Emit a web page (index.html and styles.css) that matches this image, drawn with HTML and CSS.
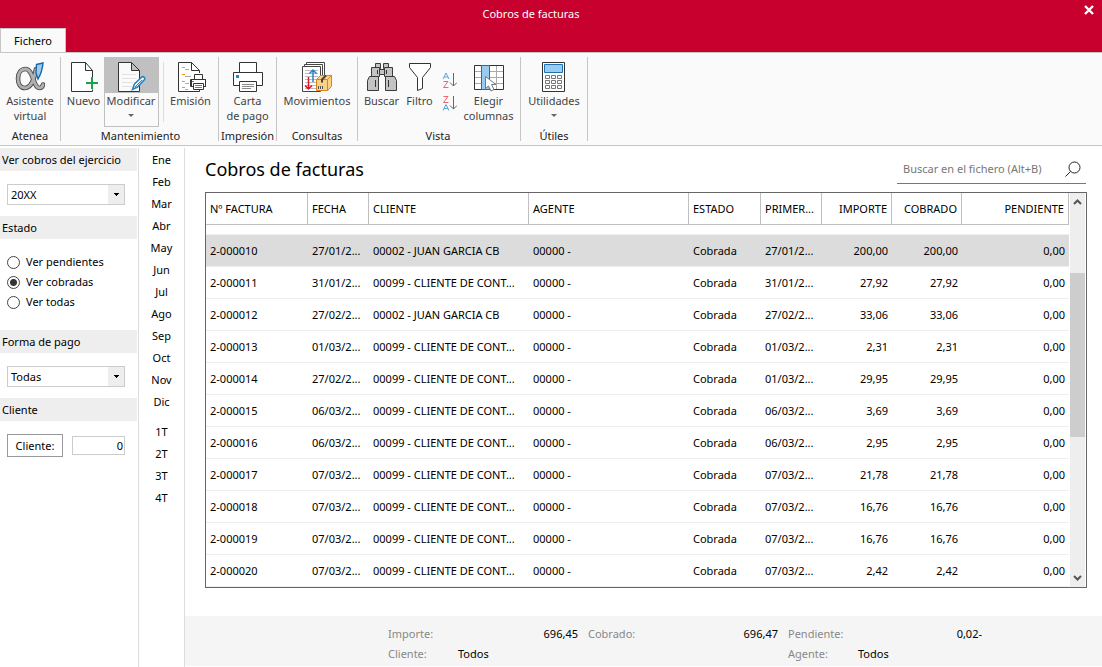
FILE: index.html
```html
<!DOCTYPE html>
<html lang="es">
<head>
<meta charset="utf-8">
<title>Cobros de facturas</title>
<link rel="stylesheet" href="styles.css">
</head>
<body>
<header class="titlebar">
  <div class="window-title">Cobros de facturas</div>
  <button class="close" type="button" aria-label="Cerrar"><svg width="10" height="10" viewBox="0 0 10 10"><path d="M1 1l8 8M9 1L1 9" stroke="#fff" stroke-width="2.4" fill="none"/></svg></button>
  <button class="tab" type="button">Fichero</button>
</header>

<nav class="ribbon" aria-label="Fichero">
  <section class="group group-atenea">
    <div class="tools">
      <button class="tool" type="button">
        <svg width="30" height="30" viewBox="0 0 30 30"><g fill="none" stroke-linecap="round"><path d="M21 7C19.500 15 17 26 10 26C5.500 26 3 22 3 16.500C3 11 6 7 10.500 7C18.500 7 18 26 24.500 26C26.500 26 27.500 25 28 22.500" stroke="#4a4a4a" stroke-width="4.600"/><path d="M21 7C19.500 15 17 26 10 26C5.500 26 3 22 3 16.500C3 11 6 7 10.500 7C18.500 7 18 26 24.500 26C26.500 26 27.500 25 28 22.500" stroke="#b0b0b0" stroke-width="2.800"/></g><path d="M21.500 2.500l6.500-1.500c-.500 6-2 11-5 16l-2-6z" fill="#9dcbee" stroke="#1769aa" stroke-width="1.400"/></svg>
        <span>Asistente<br>virtual</span>
      </button>
    </div>
    <h2>Atenea</h2>
  </section>
  <section class="group group-mantenimiento">
    <div class="tools">
      <button class="tool tool-new" type="button">
        <svg width="30" height="30" viewBox="0 0 30 30"><path d="M2.500.500h14l7 8v21h-21zM16.500.500v8h7" fill="#fff" stroke="#333"/><path d="M17 21.500h12M23 15.500v12" stroke="#fafafa" stroke-width="4"/><path d="M17 21h12M23 15v12" stroke="#16a34a" stroke-width="2"/></svg>
        <span>Nuevo</span>
      </button>
      <button class="tool tool-edit" type="button">
        <svg width="30" height="30" viewBox="0 0 30 30"><path d="M2.500.500h13l8 8v21h-21zM15.500.500v8h8" fill="#fafafa" stroke="#333"/><path d="M6 12.500h14M6 16.500h14M6 20.500h11M6 24.500h10" stroke="#e2e2e2"/><path d="M16.500 27.500l2-5.500 7.500-7c1.500-1 3.500 1 2.500 2.500l-7 7.500z" fill="#fff" stroke="#2585c7" stroke-width="1.600"/><path d="M19 25l7-7" stroke="#2585c7"/></svg>
        <span>Modificar</span><i class="caret"></i>
      </button>
      <span class="divider"></span>
      <button class="tool tool-emit" type="button">
        <svg width="30" height="30" viewBox="0 0 30 30"><path d="M23.500 11V8.500l-8-8h-13v29h21V28M15.500.500v8h8" fill="#fff" stroke="#333"/><path d="M6 5.500h3M6 12.500h3M6 19.500h3M6 25.500h3" stroke="#ee9a21"/><path d="M9 7.500h4M9 14.500h6M9 21.500h4M9 27.500h3" stroke="#aaa"/><path d="M18.500 17.500v-5h8v5h3v7h-14v-7zM14.500 17.500h15v7h-15z" fill="#fff" stroke="#333"/><path d="M17.500 21.500h10v6h-10z" fill="#fff" stroke="#333"/><path d="M19 23.500h7M19 25.500h7" stroke="#777"/><path d="M16 19.500h2" stroke="#2c8dcc"/></svg>
        <span>Emisión</span>
      </button>
    </div>
    <h2>Mantenimiento</h2>
  </section>
  <section class="group group-impresion">
    <div class="tools">
      <button class="tool" type="button">
        <svg width="30" height="30" viewBox="0 0 30 30"><path d="M6.500.500h17v10h-17z" fill="#fff" stroke="#333"/><path d="M.500 10.500h29v13H.500z" fill="#fff" stroke="#333"/><path d="M6.500 19.500h17v10h-17z" fill="#fff" stroke="#333"/><path d="M9 22.500h12M9 24.500h12M9 26.500h9" stroke="#8a8a8a"/><path d="M3 13h3v3H3z" fill="#2585c7"/></svg>
        <span>Carta<br>de pago</span>
      </button>
    </div>
    <h2>Impresión</h2>
  </section>
  <section class="group group-consultas">
    <div class="tools">
      <button class="tool" type="button">
        <svg width="30" height="30" viewBox="0 0 30 30"><path d="M4.500 3V.500h18v24h-3" fill="#fff" stroke="#444"/><path d="M2.500 5V2.500h18v24h-3" fill="#fff" stroke="#444"/><path d="M.500 4.500h18v25H.500z" fill="#fff" stroke="#444"/><path d="M3 8.500h13M3 11.500h13M3 14.500h13M3 17.500h11M3 20.500h11M3 23.500h11M3 26.500h11" stroke="#bbb"/><path d="M11 20V8M7.500 11.500L11 8l3.500 3.500" fill="none" stroke="#2585c7" stroke-width="1.500"/><path d="M6.500 15v12M3 23.500L6.500 27l3.500-3.500" fill="none" stroke="#e01030" stroke-width="1.500"/><path d="M14.500 17.500l4-4h11v11l-4 4h-11z" fill="#ffd184" stroke="#dd8517"/><path d="M14.500 17.500h11v11M25.500 17.500l4-4" fill="none" stroke="#dd8517"/><path d="M20 20.500v-3l4-4" fill="none" stroke="#444" stroke-width="2"/><path d="M16.500 24v3M18.500 24v3M20.500 24v3" stroke="#555"/></svg>
        <span>Movimientos</span>
      </button>
    </div>
    <h2>Consultas</h2>
  </section>
  <section class="group group-vista">
    <div class="tools">
      <button class="tool tool-search" type="button">
        <svg width="30" height="30" viewBox="0 0 30 30"><g fill="#c3c3c3" stroke="#3b3b3b"><path d="M12.500 7.500h5v5h-5z"/><path d="M8.500 1.500h5v5h-5zM16.500 1.500h5v5h-5z"/><path d="M4.500 5.500h8v9h-8zM17.500 5.500h8v9h-8z"/><path d="M2.500 14.500h9v14h-11v-10zM18.500 14.500h9l2 4v10h-11z"/></g><path d="M8.500 18v7M21.500 18v7M10.500 8v4M19.500 8v4" stroke="#333" fill="none"/></svg>
        <span>Buscar</span>
      </button>
      <button class="tool tool-filter" type="button">
        <svg width="30" height="30" viewBox="0 0 30 30"><path d="M4.500 1.500h21v4l-8 10v11l-5 2v-13l-8-10z" fill="#fff" stroke="#333"/></svg>
        <span>Filtro</span>
      </button>
      <div class="sorts">
        <button type="button" aria-label="Orden ascendente"><svg width="15" height="17" viewBox="0 0 15 17"><path d="M1 7l3-6 3 6M2 5h4" fill="none" stroke="#58a9d8"/><path d="M1.500 9.500h4.500l-4.500 6h5" fill="none" stroke="#ee6670"/><path d="M11.500 1v13M8 10.500l3.500 3.500 3.500-3.500" fill="none" stroke="#666"/></svg></button>
        <button type="button" aria-label="Orden descendente"><svg width="15" height="17" viewBox="0 0 15 17"><path d="M1.500 1.500H6l-4.500 6h5" fill="none" stroke="#ee6670"/><path d="M1 15.500l3-6 3 6M2 13.500h4" fill="none" stroke="#58a9d8"/><path d="M11.500 1v13M8 10.500l3.500 3.500 3.500-3.500" fill="none" stroke="#666"/></svg></button>
      </div>
      <button class="tool tool-columns" type="button">
        <svg width="30" height="30" viewBox="0 0 30 30"><path d="M.500 3.500h29v24H.500z" fill="#fff" stroke="#333"/><path d="M1 9.500h28M1 15.500h28M1 21.500h28M22.500 4v23" stroke="#aaa"/><path d="M7.500 3.500h8v24h-8z" fill="#9bcbee" stroke="#1b72b5"/><path d="M11.500 14.500v12l3-2.500 2.500 5 3-1.500-2.500-5h4.500z" fill="#fff" stroke="#777"/></svg>
        <span>Elegir<br>columnas</span>
      </button>
    </div>
    <h2>Vista</h2>
  </section>
  <section class="group group-utiles">
    <div class="tools">
      <button class="tool" type="button">
        <svg width="30" height="30" viewBox="0 0 30 30"><path d="M3.500.500h22v29h-22z" fill="#fff" stroke="#333"/><path d="M5.500 2.500h18v8h-18z" fill="#9bcbee" stroke="#1b72b5"/><g fill="#fff" stroke="#777"><path d="M6.500 13.500h4v3h-4zM12.500 13.500h4v3h-4zM18.500 13.500h4v3h-4zM6.500 18.500h4v3h-4zM12.500 18.500h4v3h-4zM18.500 18.500h4v3h-4zM6.500 23.500h4v3h-4zM12.500 23.500h4v3h-4zM18.500 23.500h4v3h-4z"/></g></svg>
        <span>Utilidades</span><i class="caret"></i>
      </button>
    </div>
    <h2>Útiles</h2>
  </section>
</nav>

<div class="workspace">
  <aside class="filters">
    <h3><label for="ejercicio">Ver cobros del ejercicio</label></h3>
    <div class="field">
      <select id="ejercicio"><option>20XX</option></select>
    </div>
    <h3>Estado</h3>
    <div class="radios">
      <label><input type="radio" name="estado">Ver pendientes</label>
      <label><input type="radio" name="estado" checked>Ver cobradas</label>
      <label><input type="radio" name="estado">Ver todas</label>
    </div>
    <h3><label for="pago">Forma de pago</label></h3>
    <div class="field">
      <select id="pago"><option>Todas</option></select>
    </div>
    <h3>Cliente</h3>
    <div class="client">
      <button type="button">Cliente:</button>
      <input type="text" value="0" aria-label="Cliente">
    </div>
  </aside>

  <nav class="periods" aria-label="Periodo">
    <button type="button">Ene</button><button type="button">Feb</button><button type="button">Mar</button><button type="button">Abr</button><button type="button">May</button><button type="button">Jun</button><button type="button">Jul</button><button type="button">Ago</button><button type="button">Sep</button><button type="button">Oct</button><button type="button">Nov</button><button type="button">Dic</button>
    <button class="quarter" type="button">1T</button><button type="button">2T</button><button type="button">3T</button><button type="button">4T</button>
  </nav>

  <main class="content">
    <div class="heading">
      <h1>Cobros de facturas</h1>
      <div class="search">
        <input type="text" placeholder="Buscar en el fichero (Alt+B)" aria-label="Buscar en el fichero">
        <svg width="16" height="16" viewBox="0 0 16 16"><circle cx="9.500" cy="6.500" r="5.500" fill="none" stroke="#222"/><path d="M5.500 10.500L.500 15.500" stroke="#222"/></svg>
      </div>
    </div>
    <div class="grid">
      <table>
        <colgroup><col class="c-num"><col class="c-date"><col class="c-client"><col><col class="c-state"><col class="c-date"><col class="c-amount"><col class="c-amount"><col class="c-pending"></colgroup>
        <thead><tr><th>Nº FACTURA</th><th>FECHA</th><th>CLIENTE</th><th>AGENTE</th><th>ESTADO</th><th>PRIMER...</th><th class="n">IMPORTE</th><th class="n">COBRADO</th><th class="n">PENDIENTE</th></tr></thead>
        <tbody>
          <tr class="partial"><td colspan="9"></td></tr>
          <tr class="selected"><td>2-000010</td><td>27/01/2...</td><td>00002 - JUAN GARCIA CB</td><td>00000 -</td><td>Cobrada</td><td>27/01/2...</td><td class="n">200,00</td><td class="n">200,00</td><td class="n">0,00</td></tr>
          <tr><td>2-000011</td><td>31/01/2...</td><td>00099 - CLIENTE DE CONT...</td><td>00000 -</td><td>Cobrada</td><td>31/01/2...</td><td class="n">27,92</td><td class="n">27,92</td><td class="n">0,00</td></tr>
          <tr><td>2-000012</td><td>27/02/2...</td><td>00002 - JUAN GARCIA CB</td><td>00000 -</td><td>Cobrada</td><td>27/02/2...</td><td class="n">33,06</td><td class="n">33,06</td><td class="n">0,00</td></tr>
          <tr><td>2-000013</td><td>01/03/2...</td><td>00099 - CLIENTE DE CONT...</td><td>00000 -</td><td>Cobrada</td><td>01/03/2...</td><td class="n">2,31</td><td class="n">2,31</td><td class="n">0,00</td></tr>
          <tr><td>2-000014</td><td>27/02/2...</td><td>00099 - CLIENTE DE CONT...</td><td>00000 -</td><td>Cobrada</td><td>01/03/2...</td><td class="n">29,95</td><td class="n">29,95</td><td class="n">0,00</td></tr>
          <tr><td>2-000015</td><td>06/03/2...</td><td>00099 - CLIENTE DE CONT...</td><td>00000 -</td><td>Cobrada</td><td>06/03/2...</td><td class="n">3,69</td><td class="n">3,69</td><td class="n">0,00</td></tr>
          <tr><td>2-000016</td><td>06/03/2...</td><td>00099 - CLIENTE DE CONT...</td><td>00000 -</td><td>Cobrada</td><td>06/03/2...</td><td class="n">2,95</td><td class="n">2,95</td><td class="n">0,00</td></tr>
          <tr><td>2-000017</td><td>07/03/2...</td><td>00099 - CLIENTE DE CONT...</td><td>00000 -</td><td>Cobrada</td><td>07/03/2...</td><td class="n">21,78</td><td class="n">21,78</td><td class="n">0,00</td></tr>
          <tr><td>2-000018</td><td>07/03/2...</td><td>00099 - CLIENTE DE CONT...</td><td>00000 -</td><td>Cobrada</td><td>07/03/2...</td><td class="n">16,76</td><td class="n">16,76</td><td class="n">0,00</td></tr>
          <tr><td>2-000019</td><td>07/03/2...</td><td>00099 - CLIENTE DE CONT...</td><td>00000 -</td><td>Cobrada</td><td>07/03/2...</td><td class="n">16,76</td><td class="n">16,76</td><td class="n">0,00</td></tr>
          <tr><td>2-000020</td><td>07/03/2...</td><td>00099 - CLIENTE DE CONT...</td><td>00000 -</td><td>Cobrada</td><td>07/03/2...</td><td class="n">2,42</td><td class="n">2,42</td><td class="n">0,00</td></tr>
        </tbody>
      </table>
      <div class="scrollbar">
        <button type="button" aria-label="Subir"><svg width="9" height="6" viewBox="0 0 9 6"><path d="M1 5l3.500-3.500L8 5" fill="none" stroke="#555" stroke-width="2"/></svg></button>
        <div class="track"><div class="thumb"></div></div>
        <button type="button" aria-label="Bajar"><svg width="9" height="6" viewBox="0 0 9 6"><path d="M1 1l3.500 3.500L8 1" fill="none" stroke="#555" stroke-width="2"/></svg></button>
      </div>
    </div>
    <footer class="totals">
      <span class="label">Importe:</span><span class="amount">696,45</span>
      <span class="label">Cobrado:</span><span class="amount">696,47</span>
      <span class="label">Pendiente:</span><span class="amount amount-signed">0,02-</span>
      <span class="label">Cliente:</span><span class="wide">Todos</span>
      <span class="label">Agente:</span><span>Todos</span>
    </footer>
  </main>
</div>
</body>
</html>
```
FILE: styles.css
```css
* { box-sizing: border-box; }

body {
  margin: 0;
  min-height: 100vh;
  display: flex;
  flex-direction: column;
  background: #fff;
  color: #000;
  font: 11px/15px "Noto Sans", "Open Sans", sans-serif;
}

button, input, select { font: inherit; color: inherit; }
button { padding: 0; border: 0; background: none; }
h1, h2, h3 { margin: 0; font-weight: 400; }
svg { display: block; flex: none; }

.titlebar {
  display: grid;
  grid-template-columns: 1fr 40px;
  grid-template-rows: 28px 24px;
  background: #c8002d;
}
.window-title {
  color: #fff;
  line-height: 28px;
  text-align: center;
}
.close {
  display: flex;
  justify-content: flex-end;
  align-items: flex-start;
  padding: 5px 8px;
}
.tab {
  width: 66px;
  background: #fafafa;
  border: 1px solid #c6c6c6;
  border-bottom: 0;
}

.ribbon {
  display: flex;
  height: 94px;
  padding: 4px 0;
  background: #fafafa;
  border-top: 1px solid #c6c6c6;
  border-bottom: 1px solid #c6c6c6;
}
.group {
  display: flex;
  flex-direction: column;
  justify-content: space-between;
  border-right: 1px solid #c6c6c6;
}
.group h2 {
  font-size: 11px;
  line-height: 11px;
  color: #222;
  text-align: center;
  white-space: nowrap;
}
.group-atenea { width: 61px; }
.group-mantenimiento { width: 158px; padding-left: 2px; }
.group-impresion { width: 58px; }
.group-consultas { width: 81px; }
.group-vista { width: 163px; padding-right: 2px; }
.group-utiles { width: 67px; }
.tools {
  display: flex;
  justify-content: center;
}
.tool {
  display: flex;
  flex-direction: column;
  align-items: center;
  height: 70px;
  padding-top: 5px;
  color: #444;
  white-space: nowrap;
}
.tool span { padding-top: 1px; }
.tool-new { width: 40px; }
.tool-edit {
  width: 55px;
  border: 1px solid #c0c0c0;
  background: linear-gradient(#c0c0c0 35px, #fafafa 35px);
  padding-top: 4px;
}
.tool-emit { width: 54px; }
.tool-search { width: 42px; }
.tool-filter { width: 34px; }
.tool-columns { width: 54px; }
.divider {
  height: 60px;
  width: 1px;
  margin: 5px 0 0 4px;
  background: #ddd;
}
.caret {
  margin-top: 6px;
  border: 3px solid transparent;
  border-top-color: #666;
  border-bottom: 0;
}
.sorts {
  display: flex;
  flex-direction: column;
  gap: 6px;
  padding: 15px 5px 0;
}

.workspace {
  flex: 1;
  display: flex;
  padding-top: 2px;
}

.filters {
  width: 139px;
  border-right: 1px solid #ddd;
}
.filters h3 {
  margin-right: 1px;
  padding-left: 2px;
  background: #eee;
  font-size: 11px;
  line-height: 23px;
}
.field { padding: 13px 13px 11px 7px; }
.field select {
  display: block;
  width: 100%;
  height: 21px;
  padding: 0 20px 0 3px;
  appearance: none;
  border: 1px solid #ccc;
  border-radius: 0;
  background:
    linear-gradient(#000, #000) right 5px top 8px / 5px 1px no-repeat,
    linear-gradient(#000, #000) right 6px top 9px / 3px 1px no-repeat,
    linear-gradient(#000, #000) right 7px top 10px / 1px 1px no-repeat,
    linear-gradient(#eee, #eee) right / 16px 100% no-repeat,
    #fff;
}
.radios {
  display: flex;
  flex-direction: column;
  padding: 13px 0 18px 7px;
}
.radios label {
  display: flex;
  align-items: center;
  gap: 6px;
  line-height: 20px;
}
.radios input {
  appearance: none;
  width: 13px;
  height: 13px;
  margin: 0;
  border: 1px solid #444;
  border-radius: 50%;
}
.radios input:checked {
  background: radial-gradient(circle, #333 3px, #fff 4px);
}
.client {
  display: flex;
  align-items: center;
  gap: 9px;
  padding: 13px 13px 0 7px;
}
.client button {
  width: 56px;
  height: 23px;
  border: 1px solid #999;
  background: #fff;
}
.client input {
  flex: 1;
  min-width: 0;
  height: 19px;
  padding: 0 1px;
  border: 1px solid #ccc;
  text-align: right;
}

.periods {
  display: flex;
  flex-direction: column;
  width: 46px;
  border-right: 1px solid #ddd;
}
.periods button { height: 22px; }
.periods .quarter { margin-top: 8px; }

.content {
  flex: 1;
  min-width: 0;
  display: flex;
  flex-direction: column;
  padding-bottom: 1px;
}
.heading {
  display: flex;
  justify-content: space-between;
  align-items: flex-start;
  padding: 6px 16px 8px 20px;
}
h1 {
  font-size: 18px;
  line-height: 30px;
}
.search {
  display: flex;
  align-items: center;
  width: 189px;
  height: 30px;
  padding: 0 5px 0 6px;
  border-bottom: 1px solid #777;
}
.search input {
  flex: 1;
  min-width: 0;
  padding: 0;
  border: 0;
  background: none;
  outline: 0;
}
.search input::placeholder { color: #777; opacity: 1; }

.grid {
  display: flex;
  gap: 1px;
  margin: 0 15px 0 20px;
  border: 1px solid #666;
}
table {
  flex: 1;
  min-width: 0;
  width: 100%;
  table-layout: fixed;
  border-collapse: separate;
  border-spacing: 0;
}
.c-num { width: 102px; }
.c-date { width: 61px; }
.c-client { width: 160px; }
.c-state { width: 72px; }
.c-amount { width: 70px; }
.c-pending { width: 107px; }
th, td {
  height: 32px;
  padding: 0 4px;
  text-align: left;
  white-space: nowrap;
  font-weight: 400;
}
th {
  border-right: 1px solid #c0c0c0;
  border-bottom: 1px solid #c0c0c0;
}
td { border-bottom: 1px solid #eee; }
td.n, th.n { text-align: right; }
.partial td { height: 10px; }
.selected td { background: #dcdcdc; }

.scrollbar {
  display: flex;
  flex-direction: column;
  width: 16px;
  padding-right: 1px;
  background: linear-gradient(to left, #fff 1px, #eee 1px);
}
.scrollbar button {
  display: flex;
  justify-content: center;
  align-items: center;
  height: 18px;
}
.track {
  flex: 1;
  padding-top: 62px;
}
.thumb {
  height: 164px;
  background: #cdcdcd;
}

.totals {
  display: grid;
  grid-template-columns: 70px 130px 70px 130px 70px 130px;
  align-content: start;
  margin-top: auto;
  padding: 8px 0 2px 203px;
  background: #f5f5f5;
  line-height: 20px;
}
.label { color: #888; }
.amount {
  padding-right: 10px;
  text-align: right;
}
.amount-signed { padding-right: 6px; }
.wide { grid-column: span 3; }
```
